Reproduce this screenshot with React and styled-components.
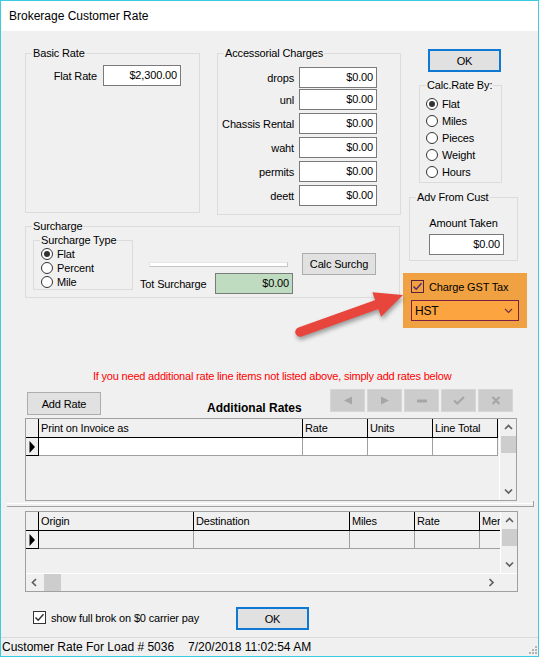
import React from "react";
import styled, { createGlobalStyle } from "styled-components";

const GlobalStyle = createGlobalStyle`
  html, body { margin: 0; padding: 0; background: #fff; }
  body { font-family: "Liberation Sans", Arial, sans-serif; font-size: 11px; color: #000; }
  * { box-sizing: border-box; }
`;

const Window = styled.div`
  width: 539px;
  height: 657px;
  border: 1px solid #3ccbe0;
  display: flex;
  flex-direction: column;
  background: #f0f0f0;
`;

const TitleBar = styled.div`
  height: 30px;
  flex: none;
  background: #fff;
  display: flex;
  align-items: center;
  padding-left: 8px;
  font-size: 12px;
`;

const Body = styled.div`
  position: relative;
  flex: 1;
  padding: 18px 0 0 24px;
  display: flex;
  flex-direction: column;
  align-items: flex-start;
  letter-spacing: -0.15px;
`;

const TopArea = styled.div`
  display: flex;
  gap: 2px;
`;

const LeftCol = styled.div`
  width: 376px;
  margin-top: 4px;
  display: flex;
  flex-direction: column;
`;

const RightCol = styled.div`
  width: 124px;
  display: flex;
  flex-direction: column;
  align-items: flex-start;
`;

const GroupRow = styled.div`
  display: flex;
  gap: 17px;
  align-items: flex-start;
`;

const Group = styled.div`
  flex: none;
  width: ${(p) => p.$w}px;
  height: ${(p) => p.$h}px;
  margin: ${(p) => p.$m || 0};
  border: 1px solid #dcdcdc;
`;

const Caption = styled.div`
  width: fit-content;
  height: 13px;
  line-height: 13px;
  margin: -7px 0 0 ${(p) => p.$x ?? 6}px;
  padding: 0 1px;
  background: #f0f0f0;
  white-space: nowrap;
`;

const FieldRow = styled.div`
  display: flex;
  align-items: center;
  gap: ${(p) => p.$gap ?? 6}px;
  margin-top: ${(p) => p.$mt || 0}px;
`;

const FieldLabel = styled.span`
  flex: none;
  width: ${(p) => p.$w}px;
  text-align: ${(p) => p.$align || "right"};
  white-space: nowrap;
`;

const Field = styled.div`
  flex: none;
  width: ${(p) => p.$w}px;
  height: 21px;
  margin: ${(p) => p.$m || 0};
  border: 1px solid #7a7a7a;
  background: ${(p) => p.$bg || "#fff"};
  text-align: right;
  padding-right: 3px;
  line-height: 19px;
`;

const Button = styled.div`
  flex: none;
  width: ${(p) => p.$w}px;
  height: ${(p) => p.$h || 23}px;
  margin: ${(p) => p.$m || 0};
  display: flex;
  align-items: center;
  justify-content: center;
  background: #e1e1e1;
  border: ${(p) => (p.$default ? "2px solid #0f78d4" : "1px solid #adadad")};
`;

const RadioList = styled.div`
  padding-left: ${(p) => p.$pl}px;
  margin-top: ${(p) => p.$mt || 0}px;
`;

const RadioRow = styled.div`
  display: flex;
  align-items: center;
  gap: 4px;
  height: ${(p) => p.$h}px;
`;

const RadioDot = styled.span`
  flex: none;
  width: 12px;
  height: 12px;
  border-radius: 50%;
  border: 1px solid #333;
  background: #fff;
  display: flex;
  align-items: center;
  justify-content: center;

  &::after {
    content: "";
    display: ${(p) => (p.$on ? "block" : "none")};
    width: 6px;
    height: 6px;
    border-radius: 50%;
    background: #333;
  }
`;

const SurchargeBody = styled.div`
  display: flex;
  align-items: flex-start;
`;

const SurchargeMiddle = styled.div`
  margin-left: 7px;
  display: flex;
  flex-direction: column;
`;

const Slider = styled.div`
  width: 139px;
  height: 5px;
  margin: 29px 0 0 9px;
  background: #fff;
  border: 1px solid #c4c4c4;
  border-top-color: #e6e6e6;
  border-left-color: #e6e6e6;
`;

const AmountLabel = styled.div`
  margin-top: 12px;
  line-height: 14px;
  text-align: center;
`;

const TaxBox = styled.div`
  width: 124px;
  height: 55px;
  margin-top: 12px;
  padding: 7px 0 0 8px;
  background: #f0a242;
`;

const CheckRow = styled.div`
  display: flex;
  align-items: center;
  gap: 5px;
  height: 13px;
`;

const CheckBox = styled.span`
  flex: none;
  width: 13px;
  height: 13px;
  border: 1px solid ${(p) => p.$line || "#333"};
  background: ${(p) => p.$bg || "#fff"};
  display: flex;
  align-items: center;
  justify-content: center;
`;

const Select = styled.div`
  width: 108px;
  height: 21px;
  margin-top: 7px;
  padding: 0 5px 0 3px;
  display: flex;
  align-items: center;
  justify-content: space-between;
  background: #fba440;
  border: 1px solid #7a2044;
  font-size: 12px;
`;

const RedNote = styled.div`
  margin: 41px 0 0 68px;
  line-height: 14px;
  color: #ff0000;
  white-space: nowrap;
  letter-spacing: -0.2px;
`;

const ActionRow = styled.div`
  width: 488px;
  margin-top: 6px;
  display: flex;
  align-items: flex-start;
`;

const Heading = styled.div`
  margin: 12px 0 0 106px;
  line-height: 14px;
  font-weight: bold;
  font-size: 12px;
  letter-spacing: 0;
`;

const NavBar = styled.div`
  margin-left: auto;
  display: flex;
  gap: 2px;
`;

const NavBtn = styled.div`
  width: 35px;
  height: 23px;
  display: flex;
  align-items: center;
  justify-content: center;
  background: #cccccc;
  border: 1px solid #d6d6d6;
`;

const GridBox = styled.div`
  flex: none;
  width: ${(p) => p.$w}px;
  height: ${(p) => p.$h}px;
  margin-top: ${(p) => p.$mt || 0}px;
  border: 1px solid #a0a0a0;
  display: flex;
  flex-direction: column;
`;

const GridMain = styled.div`
  display: flex;
  flex: 1;
  min-height: 0;
`;

const Table = styled.div`
  flex: 1;
  overflow: hidden;
  display: flex;
  flex-direction: column;
`;

const Row = styled.div`
  display: flex;
  flex: none;
  height: ${(p) => p.$h}px;
`;

const HeadCell = styled.div`
  flex: none;
  width: ${(p) => p.$w}px;
  height: 100%;
  padding-left: 2px;
  line-height: 18px;
  border-right: 1px solid #000;
  border-bottom: 1px solid #000;
  white-space: nowrap;
  overflow: hidden;
`;

const DataCell = styled.div`
  flex: none;
  width: ${(p) => p.$w}px;
  height: 100%;
  background: ${(p) => p.$bg || "transparent"};
  border-right: 1px solid #a0a0a0;
  border-bottom: 1px solid #a0a0a0;
`;

const Indicator = styled.div`
  flex: none;
  width: 13px;
  height: 100%;
  display: flex;
  align-items: center;
  justify-content: center;
  border-right: 1px solid #000;
  border-bottom: 1px solid #000;
`;

const VScroll = styled.div`
  flex: none;
  width: 17px;
  border-left: 1px solid #fff;
  display: flex;
  flex-direction: column;
`;

const ScrollBtn = styled.div`
  flex: none;
  width: 17px;
  height: 17px;
  display: flex;
  align-items: center;
  justify-content: center;
`;

const Thumb = styled.div`
  flex: none;
  width: ${(p) => p.$w || 15}px;
  height: ${(p) => p.$h || 17}px;
  margin: ${(p) => p.$m || "0 0 0 0"};
  background: #cdcdcd;
`;

const Spacer = styled.div`
  flex: 1;
`;

const HScroll = styled.div`
  flex: none;
  height: 18px;
  display: flex;
  align-items: center;
  border-top: 1px solid #fff;
`;

const Separator = styled.div`
  width: 527px;
  height: 6px;
  margin-left: -18px;
  border-right: 1px solid #a0a0a0;
  border-bottom: 1px solid #a0a0a0;
  background: linear-gradient(to bottom, transparent 2px, #fff 2px, #fff 3px, transparent 3px);
`;

const BottomRow = styled.div`
  margin-top: 15px;
  display: flex;
  align-items: flex-start;
`;

const CheckWrap = styled.div`
  width: 211px;
  padding: 4px 0 0 8px;
`;

const StatusBar = styled.div`
  height: 19px;
  flex: none;
  display: flex;
  align-items: center;
  padding-left: 1px;
  border-top: 1px solid #dadada;
  font-size: 12px;
`;

const StatusText = styled.span`
  width: ${(p) => p.$w}px;
  white-space: nowrap;
`;

const Grip = styled.svg`
  margin-left: auto;
  align-self: flex-end;
  margin-bottom: 1px;
`;

const Arrow = styled.svg`
  position: absolute;
  left: 289px;
  top: 219px;
  overflow: visible;
  filter: drop-shadow(1px 3px 2px rgba(0, 0, 0, 0.35));
  pointer-events: none;
`;

const Chevron = ({ dir }) => {
  const d = {
    up: "M1 5 L4.5 1.5 L8 5",
    down: "M1 1.5 L4.5 5 L8 1.5",
    left: "M5 1 L1.5 4.5 L5 8",
    right: "M1.5 1 L5 4.5 L1.5 8",
  }[dir];
  const vertical = dir === "up" || dir === "down";
  return (
    <svg width={vertical ? 9 : 7} height={vertical ? 7 : 9}>
      <path d={d} stroke="#606060" strokeWidth="1.7" fill="none" />
    </svg>
  );
};

const Check = ({ color = "#333" }) => (
  <svg width="11" height="11" viewBox="0 0 11 11">
    <path d="M1.5 5.5 L4.2 8.2 L9.5 2.2" stroke={color} strokeWidth="1.5" fill="none" />
  </svg>
);

const RowArrow = () => (
  <svg width="6" height="12" viewBox="0 0 6 12">
    <path d="M0.5 0 L6 6 L0.5 12 Z" fill="#000" />
  </svg>
);

const NavIcon = ({ kind }) => {
  const c = "#a6a6a6";
  if (kind === "prev")
    return (
      <svg width="10" height="9" viewBox="0 0 10 9">
        <path d="M9 0.5 V8.5 L1 4.5 Z" fill={c} />
      </svg>
    );
  if (kind === "next")
    return (
      <svg width="10" height="9" viewBox="0 0 10 9">
        <path d="M1 0.5 V8.5 L9 4.5 Z" fill={c} />
      </svg>
    );
  if (kind === "post")
    return (
      <svg width="10" height="4" viewBox="0 0 10 4">
        <rect x="0" y="0.5" width="10" height="3" fill={c} />
      </svg>
    );
  if (kind === "ok")
    return (
      <svg width="12" height="9" viewBox="0 0 12 9">
        <path d="M1 4.5 L4.2 7.5 L11 1" stroke={c} strokeWidth="2.2" fill="none" />
      </svg>
    );
  return (
    <svg width="10" height="9" viewBox="0 0 10 9">
      <path d="M1.5 1 L8.5 8 M8.5 1 L1.5 8" stroke={c} strokeWidth="2.2" fill="none" />
    </svg>
  );
};

const accessorials = [
  { label: "drops", mt: 7 },
  { label: "unl", mt: 1 },
  { label: "Chassis Rental", mt: 3 },
  { label: "waht", mt: 3 },
  { label: "permits", mt: 3 },
  { label: "deett", mt: 3 },
];

const rateColumns = [
  { title: "Print on Invoice as", w: 264 },
  { title: "Rate", w: 65 },
  { title: "Units", w: 65 },
  { title: "Line Total", w: 65 },
];

const routeColumns = [
  { title: "Origin", w: 155 },
  { title: "Destination", w: 156 },
  { title: "Miles", w: 65 },
  { title: "Rate", w: 65 },
  { title: "Mer", w: 65 },
];

function RateGrid({ columns, w, h, mt, white, hScroll }) {
  return (
    <GridBox $w={w} $h={h} $mt={mt}>
      <GridMain>
        <Table>
          <Row $h={19}>
            <HeadCell $w={13} />
            {columns.map((c) => (
              <HeadCell key={c.title} $w={c.w}>
                {c.title}
              </HeadCell>
            ))}
          </Row>
          <Row $h={18}>
            <Indicator>
              <RowArrow />
            </Indicator>
            {columns.map((c) => (
              <DataCell key={c.title} $w={c.w} $bg={white ? "#fff" : undefined} />
            ))}
          </Row>
        </Table>
        <VScroll>
          <ScrollBtn>
            <Chevron dir="up" />
          </ScrollBtn>
          <Thumb $m="0 0 0 1px" />
          <Spacer />
          <ScrollBtn>
            <Chevron dir="down" />
          </ScrollBtn>
        </VScroll>
      </GridMain>
      {hScroll && (
        <HScroll>
          <ScrollBtn>
            <Chevron dir="left" />
          </ScrollBtn>
          <Thumb $w={17} $m="0 0 0 1px" />
          <Spacer />
          <ScrollBtn>
            <Chevron dir="right" />
          </ScrollBtn>
          <ScrollBtn />
        </HScroll>
      )}
    </GridBox>
  );
}

export default function App() {
  return (
    <>
      <GlobalStyle />
      <Window>
        <TitleBar>Brokerage Customer Rate</TitleBar>
        <Body>
          <TopArea>
            <LeftCol>
              <GroupRow>
                <Group $w={175} $h={160}>
                  <Caption>Basic Rate</Caption>
                  <FieldRow $mt={5}>
                    <FieldLabel $w={71}>Flat Rate</FieldLabel>
                    <Field $w={78}>$2,300.00</Field>
                  </FieldRow>
                </Group>
                <Group $w={184} $h={162}>
                  <Caption>Accessorial Charges</Caption>
                  {accessorials.map((a) => (
                    <FieldRow key={a.label} $mt={a.mt} $gap={5}>
                      <FieldLabel $w={76}>{a.label}</FieldLabel>
                      <Field $w={78}>$0.00</Field>
                    </FieldRow>
                  ))}
                </Group>
              </GroupRow>
              <Group $w={375} $h={72} $m="11px 0 0 0">
                <Caption>Surcharge</Caption>
                <SurchargeBody>
                  <Group $w={100} $h={50} $m="7px 0 0 7px">
                    <Caption>Surcharge Type</Caption>
                    <RadioList $pl={7}>
                      <RadioRow $h={14}>
                        <RadioDot $on />
                        Flat
                      </RadioRow>
                      <RadioRow $h={14}>
                        <RadioDot />
                        Percent
                      </RadioRow>
                      <RadioRow $h={14}>
                        <RadioDot />
                        Mile
                      </RadioRow>
                    </RadioList>
                  </Group>
                  <SurchargeMiddle>
                    <Slider />
                    <FieldRow $mt={6} $gap={0}>
                      <FieldLabel $w={75} $align="left">
                        Tot Surcharge
                      </FieldLabel>
                      <Field $w={78} $bg="#c0dcc0">
                        $0.00
                      </Field>
                    </FieldRow>
                  </SurchargeMiddle>
                  <Button $w={74} $h={22} $m="20px 0 0 9px">
                    Calc Surchg
                  </Button>
                </SurchargeBody>
              </Group>
            </LeftCol>
            <RightCol>
              <Button $w={73} $m="0 0 0 25px" $default>
                OK
              </Button>
              <Group $w={83} $h={98} $m="13px 0 0 16px">
                <Caption>Calc.Rate By:</Caption>
                <RadioList $pl={6} $mt={3}>
                  {["Flat", "Miles", "Pieces", "Weight", "Hours"].map((r, i) => (
                    <RadioRow key={r} $h={17}>
                      <RadioDot $on={i === 0} />
                      {r}
                    </RadioRow>
                  ))}
                </RadioList>
              </Group>
              <Group $w={109} $h={64} $m="14px 0 0 6px">
                <Caption>Adv From Cust</Caption>
                <AmountLabel>Amount Taken</AmountLabel>
                <Field $w={75} $m="4px 0 0 19px">
                  $0.00
                </Field>
              </Group>
              <TaxBox>
                <CheckRow>
                  <CheckBox $line="#5a2040" $bg="#f0a242">
                    <Check color="#5b2a6b" />
                  </CheckBox>
                  Charge GST Tax
                </CheckRow>
                <Select>
                  HST
                  <svg width="9" height="6" viewBox="0 0 9 6">
                    <path d="M1 1 L4.5 4.5 L8 1" stroke="#6e3040" strokeWidth="1.2" fill="none" />
                  </svg>
                </Select>
              </TaxBox>
            </RightCol>
          </TopArea>

          <RedNote>If you need additional rate line items not listed above, simply add rates below</RedNote>

          <ActionRow>
            <Button $w={74} $m="3px 0 0 2px">
              Add Rate
            </Button>
            <Heading>Additional Rates</Heading>
            <NavBar>
              {["prev", "next", "post", "ok", "del"].map((k) => (
                <NavBtn key={k}>
                  <NavIcon kind={k} />
                </NavBtn>
              ))}
            </NavBar>
          </ActionRow>

          <RateGrid columns={rateColumns} w={492} h={83} mt={3} white />
          <Separator />
          <RateGrid columns={routeColumns} w={493} h={81} mt={4} hScroll />

          <BottomRow>
            <CheckWrap>
              <CheckRow>
                <CheckBox>
                  <Check />
                </CheckBox>
                show full brok on $0 carrier pay
              </CheckRow>
            </CheckWrap>
            <Button $w={73} $default>
              OK
            </Button>
          </BottomRow>

          <Arrow width="130" height="100" viewBox="0 0 130 100">
            <line x1="10" y1="82" x2="87" y2="54.5" stroke="#e8453c" strokeWidth="9.5" strokeLinecap="round" />
            <polygon points="113,45 91.1,66.7 82.3,42.3" fill="#e8453c" />
          </Arrow>
        </Body>
        <StatusBar>
          <StatusText $w={186}>Customer Rate For Load # 5036</StatusText>
          <StatusText>7/20/2018 11:02:54 AM</StatusText>
          <Grip width="10" height="10" viewBox="0 0 10 10">
            {[
              [7, 1],
              [4, 4],
              [7, 4],
              [1, 7],
              [4, 7],
              [7, 7],
            ].map(([x, y]) => (
              <rect key={`${x}-${y}`} x={x} y={y} width="2" height="2" fill="#b4b4b4" />
            ))}
          </Grip>
        </StatusBar>
      </Window>
    </>
  );
}
